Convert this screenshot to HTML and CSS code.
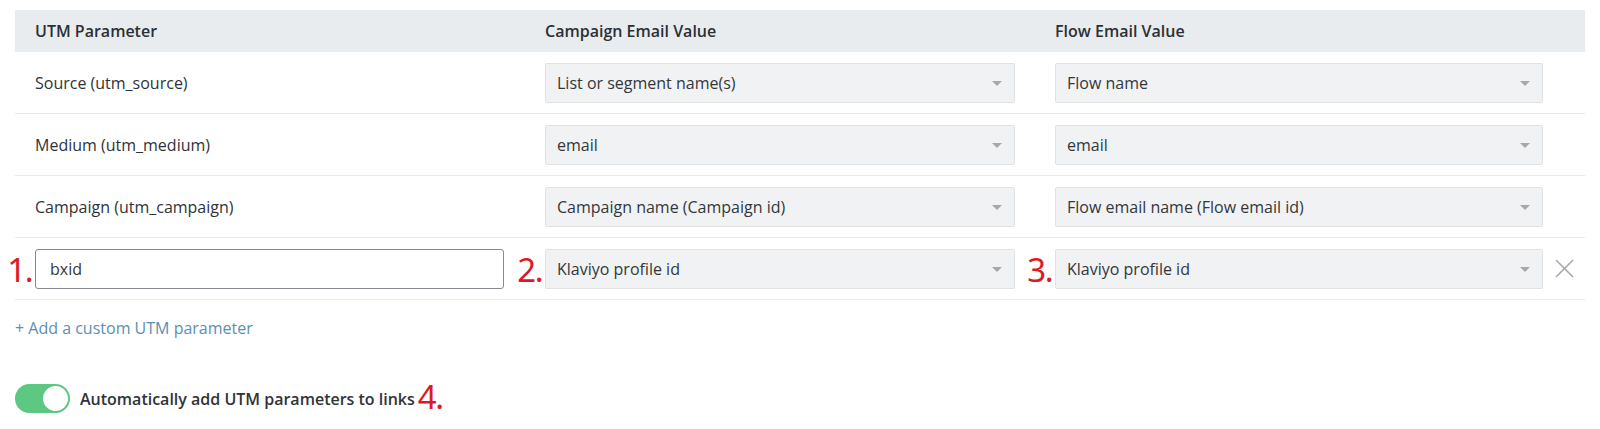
FILE: index.html
```html
<!DOCTYPE html>
<html>
<head>
<meta charset="utf-8">
<link rel="stylesheet" href="styles.css">
</head>
<body>
<div class="page">
  <div class="table">
    <div class="row head">
      <div class="cell">UTM Parameter</div>
      <div class="cell">Campaign Email Value</div>
      <div class="cell">Flow Email Value</div>
    </div>
    <div class="row">
      <div class="cell">Source (utm_source)</div>
      <div class="cell"><div class="select">List or segment name(s)<span class="caret"></span></div></div>
      <div class="cell last"><div class="select">Flow name<span class="caret"></span></div><div class="xslot"></div></div>
    </div>
    <div class="row">
      <div class="cell">Medium (utm_medium)</div>
      <div class="cell"><div class="select">email<span class="caret"></span></div></div>
      <div class="cell last"><div class="select">email<span class="caret"></span></div><div class="xslot"></div></div>
    </div>
    <div class="row">
      <div class="cell">Campaign (utm_campaign)</div>
      <div class="cell"><div class="select">Campaign name (Campaign id)<span class="caret"></span></div></div>
      <div class="cell last"><div class="select">Flow email name (Flow email id)<span class="caret"></span></div><div class="xslot"></div></div>
    </div>
    <div class="row">
      <div class="cell"><div class="field"><span class="num">1.</span><div class="input">bxid</div></div></div>
      <div class="cell"><div class="field"><span class="num">2.</span><div class="select">Klaviyo profile id<span class="caret"></span></div></div></div>
      <div class="cell last">
        <div class="field"><span class="num">3.</span><div class="select">Klaviyo profile id<span class="caret"></span></div></div>
        <div class="xslot">
          <svg class="xicon" width="19" height="19" viewBox="0 0 19 19"><path d="M1 1L18 18M18 1L1 18" stroke="#a7abaf" stroke-width="1.7" fill="none"/></svg>
        </div>
      </div>
    </div>
  </div>
  <div class="addlink">+ Add a custom UTM parameter</div>
  <div class="toggle-row">
    <div class="toggle"><div class="knob"></div></div>
    <span class="toggle-label">Automatically add UTM parameters to links</span>
    <span class="num4">4.</span>
  </div>
</div>
</body>
</html>
```

FILE: styles.css
```css
* { box-sizing: border-box; }
html, body { margin: 0; padding: 0; background: #fff; }
body {
  font-family: "Open Sans", Lato, sans-serif;
  font-size: 16px;
  color: #2f3337;
}
.page { padding: 10px 15px 0 15px; }
.table { width: 1570px; }
.row {
  display: grid;
  grid-template-columns: 510px 510px 550px;
  height: 62px;
  border-bottom: 1px solid #e8ebee;
  align-items: center;
}
.row.head {
  height: 42px;
  background: #e9ecee;
  border-bottom: none;
  font-weight: 600;
  color: #2b3035;
}
.cell { padding-left: 20px; padding-right: 20px; }
.cell.last { display: flex; align-items: center; padding-right: 0; }
.cell.last .select, .cell.last .field { width: 488px; flex: none; }
.xslot { width: 42px; display: flex; justify-content: center; align-items: center; }
.select {
  position: relative;
  height: 40px;
  background: #f1f2f4;
  border: 1px solid #dfe3e6;
  border-radius: 2px;
  padding: 0 30px 0 11px;
  display: flex;
  align-items: center;
  color: #33373b;
}
.caret {
  position: absolute;
  right: 12px;
  top: 17px;
  width: 0;
  height: 0;
  border-left: 5px solid transparent;
  border-right: 5px solid transparent;
  border-top: 5px solid #a5a9ad;
}
.field { position: relative; }
.num, .num4 {
  font-family: "Noto Sans", "Open Sans", sans-serif;
  color: #dc1a22;
  font-size: 33px;
  line-height: 1;
  letter-spacing: -1.5px;
}
.num {
  position: absolute;
  right: calc(100% + 3px);
  bottom: 3px;
}
.input {
  height: 40px;
  width: 469px;
  border: 1px solid #868b90;
  border-radius: 3px;
  background: #fff;
  padding: 0 14px;
  display: flex;
  align-items: center;
  color: #33373b;
}
.xicon { display: block; }
.addlink {
  margin-top: 18px;
  line-height: 20px;
  color: #5b8fb1;
}
.toggle-row {
  margin-top: 44px;
  display: flex;
  align-items: center;
}
.toggle {
  width: 55px;
  height: 29px;
  border-radius: 15px;
  background: #5cc882;
  position: relative;
  flex: none;
}
.knob {
  position: absolute;
  right: 2px;
  top: 2px;
  width: 25px;
  height: 25px;
  border-radius: 50%;
  background: #fff;
}
.toggle-label {
  margin-left: 10px;
  font-weight: 600;
  color: #2f3337;
}
.num4 { margin-left: 3px; position: relative; top: -2px; }
```
